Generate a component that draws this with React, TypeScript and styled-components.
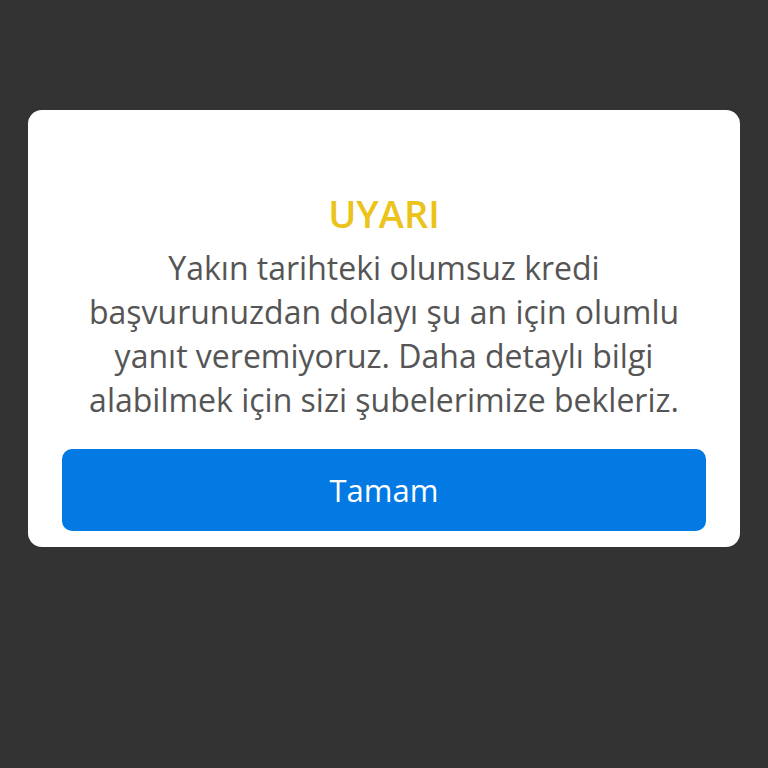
import React from "react";
import {createGlobalStyle, styled} from "styled-components";

const GlobalStyle = createGlobalStyle`
  html, body {
    margin: 0;
    padding: 0;
    background-color: #333333;
  }
  body {
    font-family: "Open Sans", "Noto Sans", sans-serif;
  }
`

const StyledOverlay = styled.main`
  width: 768px;
  height: 768px;
  box-sizing: border-box;
  padding: 110px 28px 0 28px;
  display: flex;
  flex-direction: column;
  align-items: stretch;
`

const StyledDialog = styled.section`
  background-color: #ffffff;
  border-radius: 14px;
  padding: 81px 34px 16px 34px;
  display: flex;
  flex-direction: column;
  align-items: stretch;
  text-align: center;
`

const StyledTitle = styled.h2`
  margin: 0 0 11px 0;
  color: #ebc31b;
  font-size: 38px;
  font-weight: 600;
  line-height: 44px;
`

const StyledMessage = styled.p`
  margin: 0 0 27px 0;
  color: #555555;
  font-size: 32px;
  line-height: 44px;
`

const StyledButton = styled.button`
  height: 82px;
  border: none;
  border-radius: 10px;
  background-color: #0279e3;
  color: #ffffff;
  font-family: "Open Sans", "Noto Sans", sans-serif;
  font-size: 31px;
  cursor: pointer;
`

const App = () => {
    return (
        <>
            <GlobalStyle/>
            <StyledOverlay>
                <StyledDialog>
                    <StyledTitle>UYARI</StyledTitle>
                    <StyledMessage>
                        Yakın tarihteki olumsuz kredi başvurunuzdan dolayı şu an için olumlu yanıt veremiyoruz. Daha detaylı bilgi alabilmek için sizi şubelerimize bekleriz.
                    </StyledMessage>
                    <StyledButton>Tamam</StyledButton>
                </StyledDialog>
            </StyledOverlay>
        </>
    );
}

export default App;
